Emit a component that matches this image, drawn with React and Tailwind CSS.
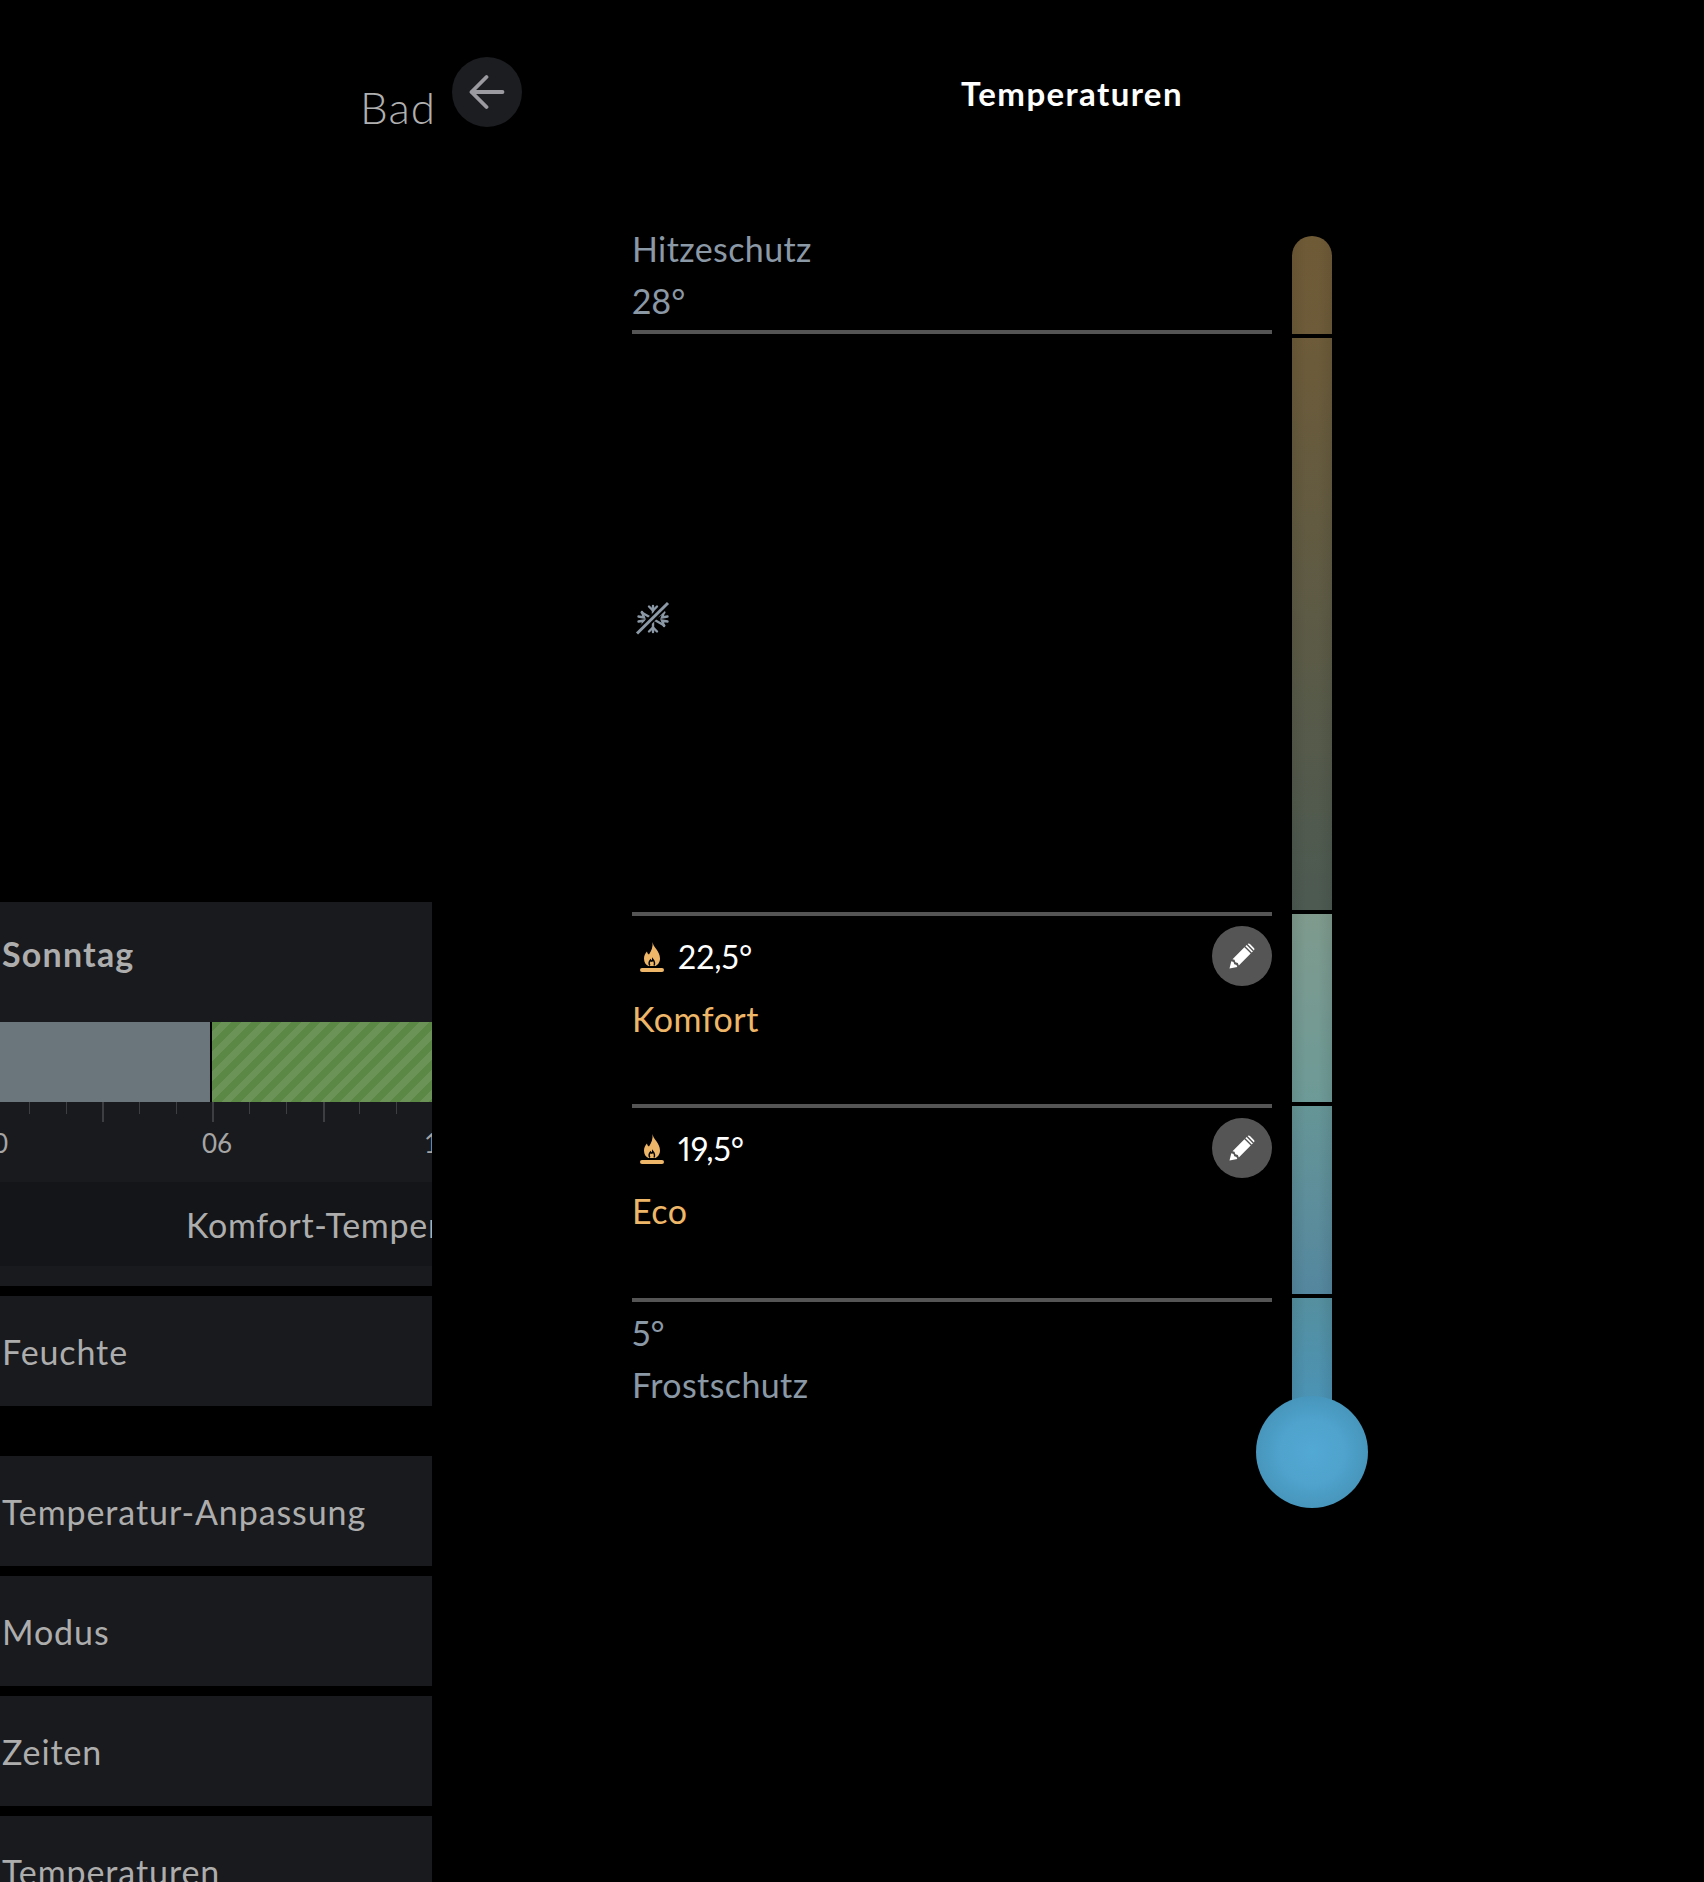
import React from "react";

function SnowOff() {
  return (
    <svg width="36" height="36" viewBox="0 0 36 36" fill="none" stroke="#8b98a6" strokeWidth="2.4" strokeLinecap="round">
      <path d="M18 5v26M6.7 11.5l22.6 13M6.7 24.5l22.6-13" />
      <path d="M14 5.5l4 4 4-4M14 30.5l4-4 4 4M3.5 15.5l5.5 1-2-5.5M32.5 15.5l-5.5 1 2-5.5M3.5 20.5l5.5-1-2 5.5M32.5 20.5l-5.5-1 2 5.5" />
      <path d="M2 32.5L33 2" stroke="#000" strokeWidth="7" strokeLinecap="butt" />
      <path d="M2 32.5L33 2" strokeWidth="3" strokeLinecap="butt" />
    </svg>
  );
}

function Flame() {
  return (
    <svg width="24" height="32" viewBox="0 0 24 32" className="shrink-0">
      <path fill="#edb668" d="M12.500 1C13 6 20 10 20 17.500c0 4-2.500 6.500-4.500 7.500h-7C6 24 4 21.500 4 17.500c0-3 1.500-5.500 3-7 .2 1.500 1 2.500 2 3C11.500 9.500 13 6 12.500 1z" />
      <path fill="none" stroke="#000" strokeWidth="1.400" d="M9.800 24.500C8.500 22.500 9.200 20.500 10.500 19c.3.800.8 1.200 1.500 1.200.5-.8.7-1.500.7-2 1.500 1.800 2.500 4 1.300 6.300" />
      <rect x="0" y="27" width="24" height="4" rx="2" fill="#edb668" />
    </svg>
  );
}

function Pencil() {
  return (
    <svg width="26" height="26" viewBox="0 0 26 26">
      <path fill="#fff" d="M0.500 25.500l1.800-7.300 2.200.8.800 2.200 2.200.800.800 2z" />
      <path fill="#fff" d="M3.500 16.200L15.400 4.300l6.300 6.300L9.800 22.500l-1-2.400-2.400-.9-.9-2.400z" />
      <path fill="#fff" d="M16.400 3.300l1.200-1.200 6.300 6.300-1.200 1.200z" />
      <path fill="#fff" d="M18.600 1.100c.7-.7 1.700-.7 2.400 0l3.900 3.900c.7.7.7 1.700 0 2.400z" />
    </svg>
  );
}

function Ticks() {
  const items = [29, 65, 103, 139, 175, 212, 249, 285, 322, 359, 395];
  return (
    <div className="flex h-5 pl-[29px]">
      {items.map((x, i) => (
        <div key={x} className="w-[36.7px] shrink-0">
          <div className={(i + 1) % 3 === 0 ? "w-[2px] h-5 bg-[#3c3e42]" : "w-[1px] h-3 bg-[#3c3e42]"} />
        </div>
      ))}
    </div>
  );
}

function MenuCard({ label, extra }) {
  return (
    <div className={"h-[110px] shrink-0 bg-[#191a1e] flex items-center pl-[2px] text-[34px] tracking-[0.9px] text-[#adadad] whitespace-nowrap " + extra}>
      {label}
    </div>
  );
}

function EditRow({ value, name, h }) {
  return (
    <div className={"flex justify-between items-start pt-[10px] " + h}>
      <div className="flex flex-col">
        <div className="flex items-center gap-[14px] pl-[8px] h-[60px] pt-[2px] text-[32px] text-white leading-none proportional-nums">
          <Flame />
          <span>{value}</span>
        </div>
        <div className="mt-[3px] text-[34px] tracking-[0.5px] leading-[60px] text-[#edb668]">{name}</div>
      </div>
      <button className="w-[60px] h-[60px] rounded-full bg-[#555555] flex items-center justify-center">
        <Pencil />
      </button>
    </div>
  );
}

export default function App() {
  return (
    <div className="flex w-[1704px] h-[1882px] overflow-hidden bg-black font-['Lato',sans-serif]">
      <aside className="w-[432px] shrink-0 overflow-hidden flex flex-col">
        <div className="h-[902px] shrink-0 pt-[81px] pl-[360px] text-[44px] font-light tracking-[1px] leading-[52px] text-[#b0b0b0] whitespace-nowrap">Bad Oben</div>
        <div className="h-[384px] shrink-0 bg-[#191a1e] flex flex-col">
          <div className="h-[120px] shrink-0 pl-[2px] pt-[29px] text-[34px] tracking-[1.200px] leading-[45px] font-bold text-[#adadad]">Sonntag</div>
          <div className="h-[80px] shrink-0 flex">
            <div className="w-[210px] shrink-0 bg-[#6b767c]" />
            <div className="w-[2px] shrink-0 bg-black" />
            <div className="flex-1 bg-[repeating-linear-gradient(135deg,#5b8845_0,#5b8845_7px,#6b9358_7px,#6b9358_14px)]" />
          </div>
          <Ticks />
          <div className="h-[60px] shrink-0 text-[26px] text-[#a5a5a5] leading-[42px] flex">
            <span className="w-[29px] -ml-[22px] shrink-0 text-center">00</span>
            <span className="ml-[195px] w-[30px] shrink-0 text-center">06</span>
            <span className="ml-[192px] w-[30px] shrink-0 text-center">12</span>
          </div>
          <div className="h-[84px] shrink-0 bg-[#141518] pl-[186px] pt-[1px] text-[34px] tracking-[0.7px] leading-[84px] text-[#adadad] whitespace-nowrap">Komfort-Temperatur</div>
        </div>
        <div className="flex flex-col">
          <MenuCard label="Feuchte" extra="mt-[10px]" />
          <MenuCard label="Temperatur-Anpassung" extra="mt-[50px]" />
          <MenuCard label="Modus" extra="mt-[10px]" />
          <MenuCard label="Zeiten" extra="mt-[10px]" />
          <MenuCard label="Temperaturen" extra="mt-[10px]" />
        </div>
      </aside>

      <main className="ml-[8px] w-[1264px] shrink-0 flex flex-col">
        <header className="h-[224px] shrink-0 pt-[57px] pl-[12px] grid grid-cols-[70px_1fr_82px]">
          <button className="w-[70px] h-[70px] rounded-full bg-[#1c1d21] flex items-center justify-center">
            <svg width="36" height="36" viewBox="0 0 36 36" fill="none" stroke="#9a9aa0" strokeWidth="3.8" strokeLinecap="round" strokeLinejoin="round">
              <path d="M2.500 18h31M17.500 3L2.500 18l15 15" />
            </svg>
          </button>
          <h1 className="text-center text-[33px] font-bold tracking-[1.4px] leading-[72px] text-white">Temperaturen</h1>
        </header>

        <div className="flex pl-[192px] gap-5">
          <div className="w-[640px] shrink-0 flex flex-col text-[#8b98a6]">
            <div className="h-[106px] text-[34px] leading-[52px] proportional-nums">
              <div className="-mt-[1px] tracking-[0.4px]">Hitzeschutz</div>
              <div>28°</div>
            </div>
            <div className="h-1 bg-[#555555]" />
            <div className="h-[578px] flex items-center pb-[8px] pl-[3px]">
              <SnowOff />
            </div>
            <div className="h-1 bg-[#555555]" />
            <EditRow value="22,5°" name="Komfort" h="h-[188px]" />
            <div className="h-1 bg-[#555555]" />
            <EditRow value="19,5°" name="Eco" h="h-[190px]" />
            <div className="h-1 bg-[#555555]" />
            <div className="pt-[5px] text-[34px] leading-[52px] proportional-nums">
              <div>5°</div>
              <div className="tracking-[0.4px]">Frostschutz</div>
            </div>
          </div>

          <div className="w-[112px] shrink-0 -ml-[36px] pt-[12px] flex flex-col items-center">
            <div className="w-10 h-[98px] rounded-t-[20px] bg-[linear-gradient(90deg,rgba(0,0,0,.08),transparent_35%,transparent_65%,rgba(0,0,0,.08)),linear-gradient(180deg,#6f5a36,#6d5b39)]" />
            <div className="w-10 h-[572px] mt-1 bg-[linear-gradient(90deg,rgba(0,0,0,.08),transparent_35%,transparent_65%,rgba(0,0,0,.08)),linear-gradient(180deg,#6d5b39,#4c5a52)]" />
            <div className="w-10 h-[188px] mt-1 bg-[linear-gradient(90deg,rgba(0,0,0,.08),transparent_35%,transparent_65%,rgba(0,0,0,.08)),linear-gradient(180deg,#7f9a8d,#6d9a97)]" />
            <div className="w-10 h-[188px] mt-1 bg-[linear-gradient(90deg,rgba(0,0,0,.08),transparent_35%,transparent_65%,rgba(0,0,0,.08)),linear-gradient(180deg,#669596,#54879f)]" />
            <div className="w-10 h-[110px] mt-1 bg-[linear-gradient(90deg,rgba(0,0,0,.08),transparent_35%,transparent_65%,rgba(0,0,0,.08)),linear-gradient(180deg,#558f9f,#4a93b6)]" />
            <div className="w-[112px] h-[112px] -mt-[12px] rounded-full bg-[radial-gradient(circle_at_50%_50%,#52a9d4_0%,#4fa3cd_40%,#4795bb_72%,#3f88ad_90%,#387a9c_100%)]" />
          </div>
        </div>
      </main>
    </div>
  );
}
